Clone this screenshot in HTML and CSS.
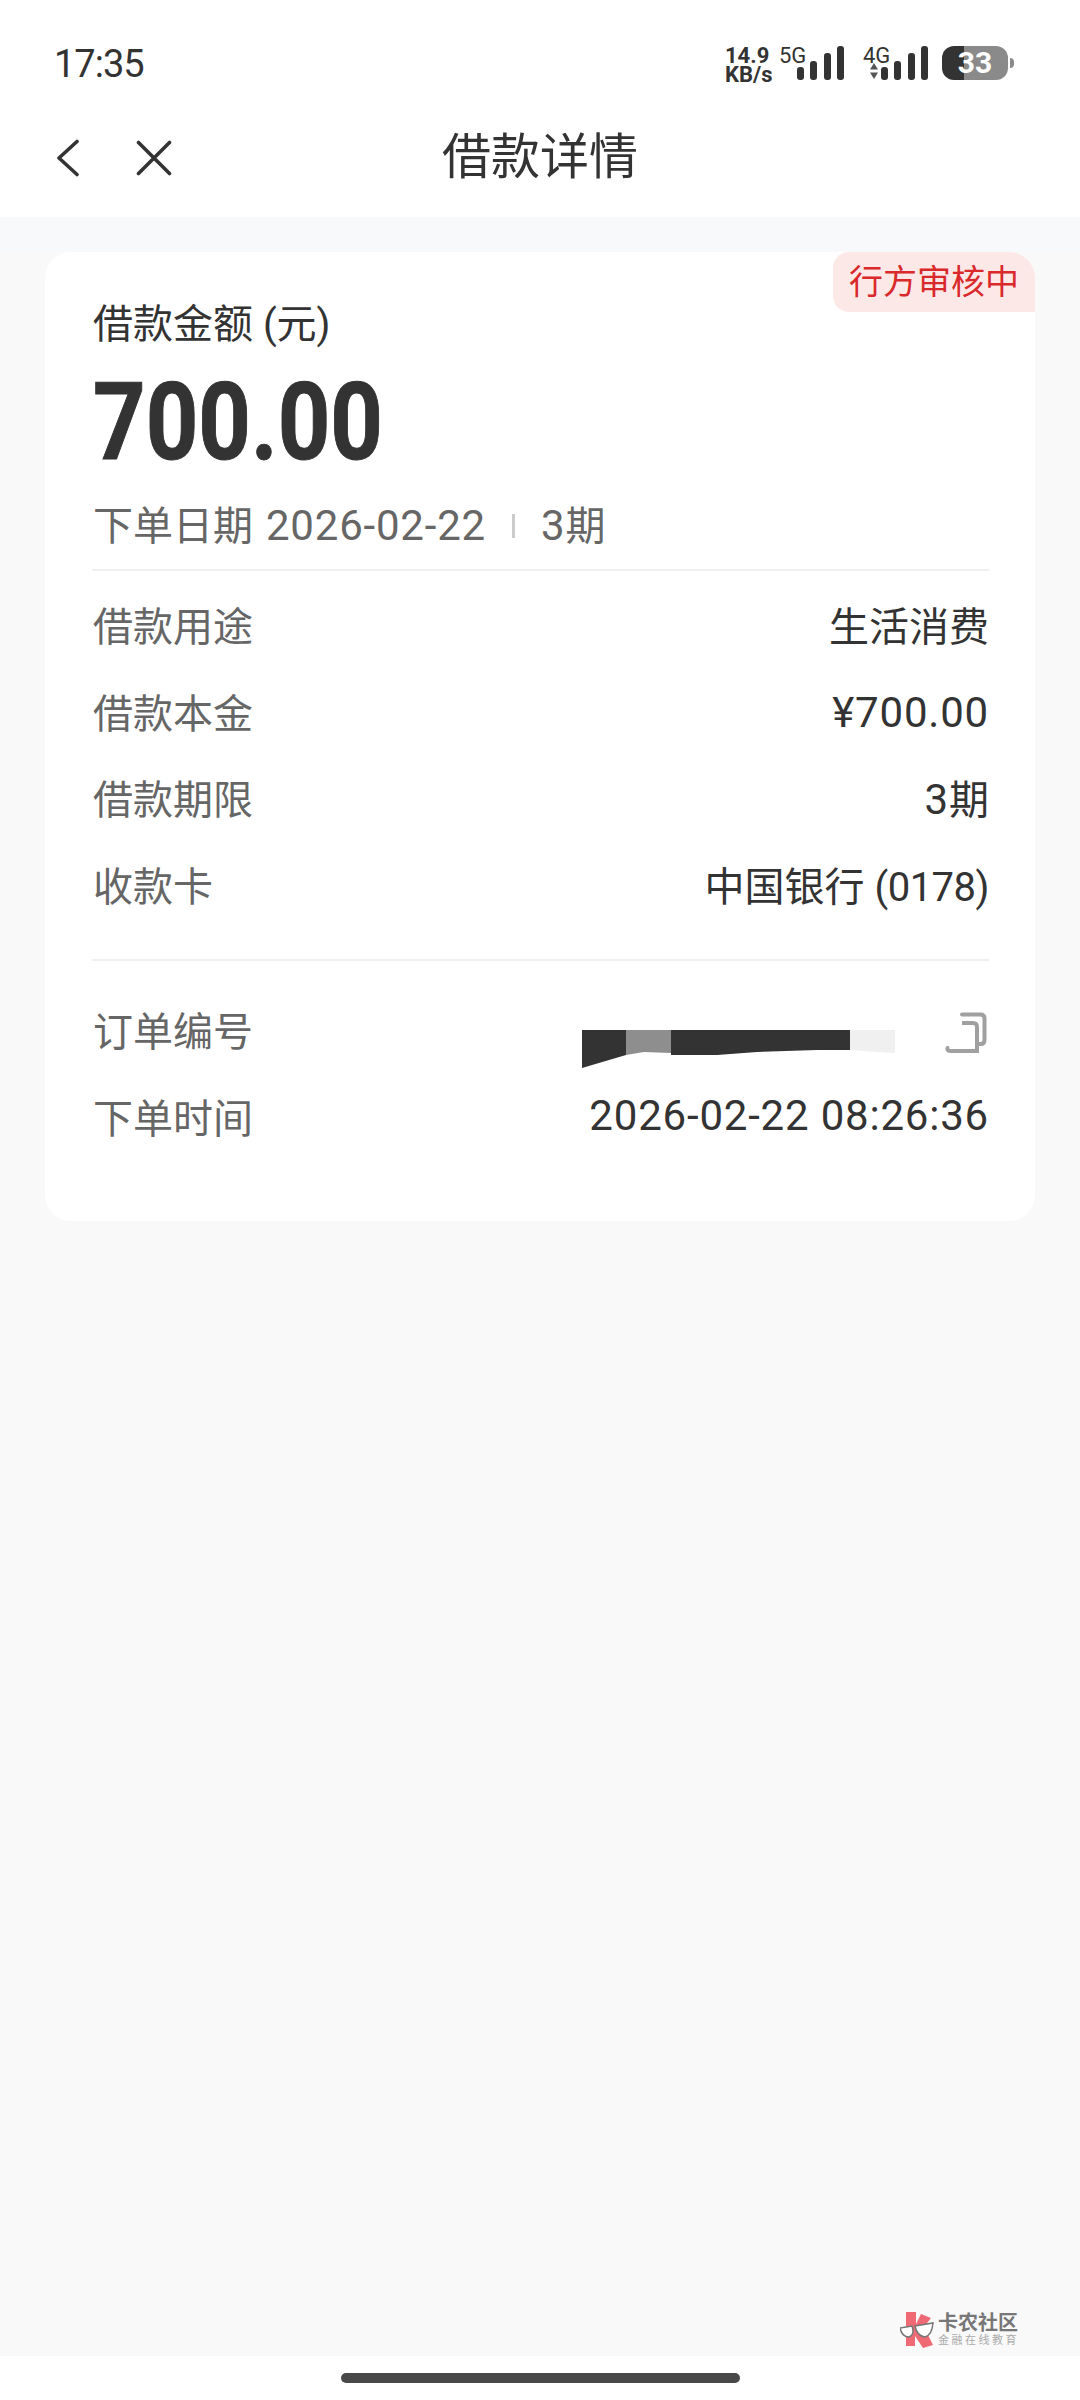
FILE: index.html
```html
<!DOCTYPE html>
<html lang="zh-CN">
<head>
<meta charset="utf-8">
<title>借款详情</title>
<link rel="stylesheet" href="styles.css">
</head>
<body>
<div class="page">
  <header class="top">
    <div class="status">
      <span class="time">17:35</span>
      <div class="status-right">
        <div class="speed">14.9<br>KB/s</div>
        <div class="net net-5g">
          <span class="net-label">5G</span>
          <div class="bars"><i class="b1"></i><i class="b2"></i><i class="b3"></i><i class="b4"></i></div>
        </div>
        <div class="net net-4g">
          <span class="net-label">4G</span>
          <svg class="arrows" width="8" height="16" viewBox="0 0 8 16"><path d="M4 0 8 6.500H0ZM0 9.500H8L4 16Z" fill="#555"/></svg>
          <div class="bars"><i class="b1"></i><i class="b2"></i><i class="b3"></i><i class="b4"></i></div>
        </div>
        <div class="battery"><div class="battery-body"><span>33</span></div><div class="battery-nub"></div></div>
      </div>
    </div>
    <nav class="nav">
      <svg class="ico-back" width="24" height="38" viewBox="0 0 24 38"><path d="M21 2.500 3 19l18 16.500" fill="none" stroke="#333" stroke-width="3.600" stroke-linecap="round" stroke-linejoin="round"/></svg>
      <svg class="ico-close" width="36" height="36" viewBox="0 0 36 36"><path d="M2.500 2.500l31 31M33.500 2.500l-31 31" fill="none" stroke="#333" stroke-width="3.600" stroke-linecap="round"/></svg>
      <h1 class="title">借款详情</h1>
    </nav>
  </header>
  <div class="band"></div>
  <main class="content">
    <section class="card">
      <div class="badge">行方审核中</div>
      <div class="amount-label">借款金额 (元)</div>
      <div class="amount">700.00</div>
      <div class="meta"><span>下单日期 <span class="num meta-date">2026-02-22</span></span><i class="meta-sep"></i><span><span class="num">3</span>期</span></div>
      <div class="rows rows-a">
        <div class="row"><span class="k">借款用途</span><span class="v">生活消费</span></div>
        <div class="row"><span class="k">借款本金</span><span class="v num money">¥700.00</span></div>
        <div class="row"><span class="k">借款期限</span><span class="v"><span class="num">3</span>期</span></div>
        <div class="row"><span class="k">收款卡</span><span class="v">中国银行 <span class="card-no">(0178)</span></span></div>
      </div>
      <div class="rows rows-b">
        <div class="row">
          <span class="k">订单编号</span>
          <div class="order">
            <svg class="redact" width="314" height="40" viewBox="0 0 314 40">
              <path d="M0 2H44V27L0 40Z" fill="#333"/>
              <path d="M44 2H89V25L62 24 44 27Z" fill="#8e8e8e"/>
              <path d="M89 2H268V22H235L175 24 135 27H89Z" fill="#333"/>
              <path d="M268 2H313V25L295 24 268 22Z" fill="#f0f0f0"/>
            </svg>
            <svg class="copy" width="42" height="42" viewBox="0 0 42 42"><path d="M17 2.500H35.500Q39.500 2.500 39.500 6.500V28Q39.500 32 35.500 32H32V39H5Q2 39 2.500 36" fill="none" stroke="#a0a0a0" stroke-width="4" stroke-linecap="round"/><path d="M17 11H28Q32 11 32 15V37" fill="none" stroke="#a0a0a0" stroke-width="4"/></svg>
          </div>
        </div>
        <div class="row"><span class="k">下单时间</span><span class="v num">2026-02-22 08:26:36</span></div>
      </div>
    </section>
    <div class="mark">
      <svg class="mark-logo" width="34" height="36" viewBox="0 0 34 36">
        <path d="M6 0H16V12L21 2 31 6 24 15 33 33 23 36 15 24V34H6Z" fill="#ef6a75"/>
        <path d="M0 16 12 14Q15 23 9 25 2 25 0 16ZM15 14 33 11Q32 23 25 25 17 24 15 14Z" fill="#fff" stroke="#777" stroke-width="1.500"/>
      </svg>
      <div class="mark-text"><span class="mark-main">卡农社区</span><span class="mark-sub">金融在线教育</span></div>
    </div>
  </main>
  <footer class="home"><div class="pill"></div></footer>
</div>
</body>
</html>
```
FILE: styles.css
```css
* { box-sizing: border-box; }
html, body { margin: 0; padding: 0; }
body {
  width: 1080px;
  height: 2400px;
  background: #f9f9f9;
  color: #333;
  font-family: "Roboto", "Noto Sans CJK SC", sans-serif;
}
.page { display: flex; flex-direction: column; height: 2400px; }

.top { height: 217px; background: #fff; flex: none; }
.status {
  height: 126px;
  padding: 43px 66px 0 54px;
  display: flex;
  justify-content: space-between;
  align-items: flex-start;
}
.time { font-size: 38px; line-height: 42px; letter-spacing: -1px; color: #333; }
.status-right { display: flex; align-items: flex-start; padding-top: 3px; }
.speed {
  width: 54px;
  font-weight: 700;
  font-size: 22px;
  line-height: 19px;
  color: #333;
}
.net { position: relative; display: flex; align-items: flex-end; height: 34px; }
.net-label { font-size: 22px; line-height: 22px; color: #333; position: absolute; top: -1px; left: 0; }
.net-5g { width: 65px; padding-left: 18px; }
.net-4g { width: 79px; margin-left: 19px; padding-left: 18px; }
.arrows { position: absolute; left: 7px; bottom: 1px; }
.bars { display: flex; align-items: flex-end; gap: 6.300px; height: 34px; }
.bars i { display: block; width: 7px; background: #333; border-radius: 3px; }
.bars .b1 { height: 13px; }
.bars .b2 { height: 19px; }
.bars .b3 { height: 27px; }
.bars .b4 { height: 34px; }
.battery { display: flex; align-items: center; }
.battery-body {
  width: 66px;
  height: 34px;
  border-radius: 12px;
  background: linear-gradient(90deg, #333 0, #333 22px, #8a8a8a 22px);
  color: #fff;
  font-weight: 700;
  font-size: 30px;
  line-height: 34px;
  text-align: center;
}
.battery-nub { width: 4px; height: 10px; margin-left: 2px; background: #8a8a8a; border-radius: 0 4px 4px 0; }

.nav { position: relative; height: 91px; display: flex; align-items: center; padding-left: 56px; }
.ico-back { margin-top: -28px; }
.ico-close { margin-left: 56px; margin-top: -28px; }
.title {
  position: absolute;
  left: 0;
  right: 0;
  top: 3px;
  margin: 0;
  text-align: center;
  font-size: 49px;
  font-weight: 400;
  line-height: 58px;
  color: #333;
}

.band { height: 35px; background: #f8f9fb; flex: none; }
.content { position: relative; flex: 1; padding: 0 45px; }
.card {
  position: relative;
  height: 969px;
  padding: 51px 46px 0 48px;
  background: #fff;
  border-radius: 26px;
}
.badge {
  position: absolute;
  top: 0;
  right: 0;
  width: 202px;
  height: 60px;
  background: #fde8e8;
  color: #d9292b;
  font-size: 34px;
  line-height: 60px;
  text-align: center;
  border-radius: 16px 26px 0 16px;
}
.amount-label { font-size: 40px; line-height: 44px; color: #333; }
.amount {
  font-weight: 700;
  font-size: 108px;
  line-height: 108px;
  margin-top: 21px;
  color: #333;
  -webkit-text-stroke: 1px #333;
  transform: scaleX(0.85);
  transform-origin: left center;
}
.meta {
  display: flex;
  align-items: center;
  margin-top: 26px;
  font-size: 40px;
  line-height: 48px;
  color: #666;
  height: 48px;
}
.num { font-size: 42px; letter-spacing: 0.8px; }
.meta-date { margin-left: 3px; }
.money { margin-top: 3px; }
.card-no { font-size: 40px; letter-spacing: -0.5px; }
.meta-sep { width: 3px; height: 24px; background: #ccc; margin: 0 26px; }
.rows-a { margin-top: 19px; padding-top: 10px; border-top: 2px solid #f0f0f0; margin-left: -1px; padding-left: 1px; height: 392px; border-bottom: 2px solid #f0f0f0; }
.rows-b { padding-top: 25px; }
.row {
  display: flex;
  justify-content: space-between;
  align-items: center;
  height: 86.500px;
  font-size: 40px;
}
.k { color: #666; }
.v { color: #333; }
.order { display: flex; align-items: center; }
.redact { margin-top: 38px; }
.copy { margin-left: 49px; margin-right: 2px; margin-top: 7px; }

.mark {
  position: absolute;
  left: 900px;
  top: 2060px;
  display: flex;
  align-items: center;
  gap: 4px;
}
.mark-text { display: flex; flex-direction: column; }
.mark-main { font-size: 20px; line-height: 22px; font-weight: 700; color: #777; }
.mark-sub { font-size: 11px; line-height: 14px; letter-spacing: 2.500px; color: #aaa; }

.home { height: 44px; flex: none; background: #fff; display: flex; justify-content: center; padding-top: 17px; }
.pill { width: 399px; height: 10px; border-radius: 5px; background: #484848; }
```
